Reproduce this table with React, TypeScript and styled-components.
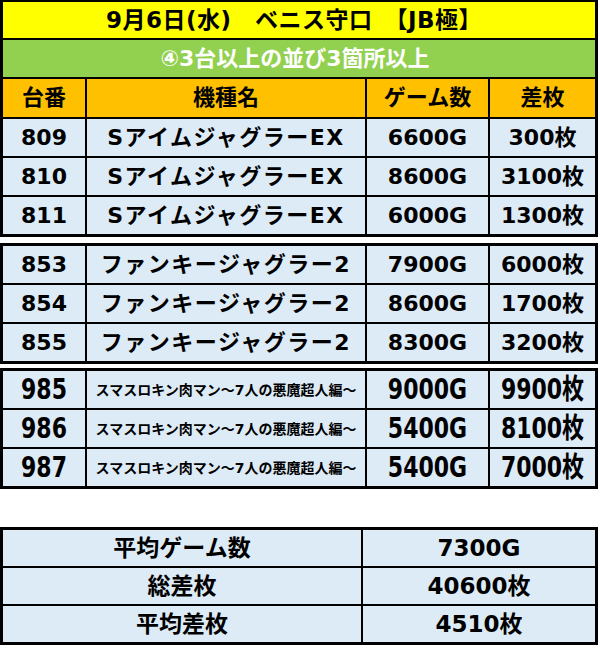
import React from 'react'
import styled, { createGlobalStyle } from 'styled-components'

const GlobalStyle = createGlobalStyle`
  html, body {
    margin: 0;
    padding: 0;
    background: #ffffff;
  }
  body {
    font-family: "DejaVu Sans", "Noto Sans CJK JP", sans-serif;
    font-weight: 700;
    color: #000000;
  }
`

const Page = styled.div`
  /* Box model */
  display: flex;
  flex-direction: column;
  width: 598px;
`

const Block = styled.div<{ $cols: string; $mt?: number }>`
  /* Box model */
  display: grid;
  grid-template-columns: ${(p) => p.$cols};
  gap: 2px;
  margin-top: ${(p) => p.$mt ?? 0}px;
  border: 3px solid #000;
  /* Visual */
  background: #000;
`

const TopBlock = styled(Block)`
  border-top-width: 2px;
`

const Cell = styled.div<{ $h?: number; $size?: number; $spacing?: number }>`
  /* Box model */
  display: flex;
  align-items: center;
  justify-content: center;
  height: ${(p) => p.$h ?? 37}px;
  overflow: hidden;
  /* Typography */
  font-size: ${(p) => p.$size ?? 22}px;
  line-height: 1;
  letter-spacing: ${(p) => p.$spacing ?? 0}px;
  white-space: nowrap;
  /* Visual */
  background: #ddebf7;
`

const TitleCell = styled(Cell)`
  grid-column: 1 / -1;
  padding-right: 10px;
  background: #ffff00;
`

const SubtitleCell = styled(Cell)`
  grid-column: 1 / -1;
  padding-right: 8px;
  color: #ffffff;
  background: #92d050;
`

const HeadCell = styled(Cell)`
  background: #ffc000;
`

const Tall = styled.span`
  display: inline-block;
  transform: scaleY(1.28);
`

type Row = { no: string; name: string; games: string; diff: string }

const groups: Row[][] = [
  [
    { no: '809', name: 'SアイムジャグラーEX', games: '6600G', diff: '300枚' },
    { no: '810', name: 'SアイムジャグラーEX', games: '8600G', diff: '3100枚' },
    { no: '811', name: 'SアイムジャグラーEX', games: '6000G', diff: '1300枚' },
  ],
  [
    { no: '853', name: 'ファンキージャグラー2', games: '7900G', diff: '6000枚' },
    { no: '854', name: 'ファンキージャグラー2', games: '8600G', diff: '1700枚' },
    { no: '855', name: 'ファンキージャグラー2', games: '8300G', diff: '3200枚' },
  ],
  [
    { no: '985', name: 'スマスロキン肉マン～7人の悪魔超人編～', games: '9000G', diff: '9900枚' },
    { no: '986', name: 'スマスロキン肉マン～7人の悪魔超人編～', games: '5400G', diff: '8100枚' },
    { no: '987', name: 'スマスロキン肉マン～7人の悪魔超人編～', games: '5400G', diff: '7000枚' },
  ],
]

const summary = [
  { label: '平均ゲーム数', value: '7300G' },
  { label: '総差枚', value: '40600枚' },
  { label: '平均差枚', value: '4510枚' },
]

const COLS = '82px 278px 121px 105px'

const DataRows: React.FC<{ rows: Row[]; tall?: boolean }> = ({ rows, tall }) => (
  <>
    {rows.map((r) => (
      <React.Fragment key={r.no}>
        <Cell>{tall ? <Tall>{r.no}</Tall> : r.no}</Cell>
        <Cell $size={tall ? 14 : 22} $spacing={tall ? 0 : 1.5}>
          {r.name}
        </Cell>
        <Cell>{tall ? <Tall>{r.games}</Tall> : r.games}</Cell>
        <Cell>{tall ? <Tall>{r.diff}</Tall> : r.diff}</Cell>
      </React.Fragment>
    ))}
  </>
)

export default function App() {
  return (
    <>
      <GlobalStyle />
      <Page>
        <TopBlock $cols={COLS}>
          <TitleCell $h={36} $size={23} $spacing={0.5}>
            9月6日(水)　ベニス守口　【JB極】
          </TitleCell>
          <SubtitleCell $h={37}>④3台以上の並び3箇所以上</SubtitleCell>
          <HeadCell $h={38}>台番</HeadCell>
          <HeadCell $h={38}>機種名</HeadCell>
          <HeadCell $h={38}>ゲーム数</HeadCell>
          <HeadCell $h={38}>差枚</HeadCell>
          <DataRows rows={groups[0]} />
        </TopBlock>
        <Block $cols={COLS} $mt={6}>
          <DataRows rows={groups[1]} />
        </Block>
        <Block $cols={COLS} $mt={4}>
          <DataRows rows={groups[2]} tall />
        </Block>
        <Block $cols="358px 232px" $mt={38}>
          {summary.map((s) => (
            <React.Fragment key={s.label}>
              <Cell $h={36} $size={23}>
                {s.label}
              </Cell>
              <Cell $h={36} $size={23}>
                {s.value}
              </Cell>
            </React.Fragment>
          ))}
        </Block>
      </Page>
    </>
  )
}
